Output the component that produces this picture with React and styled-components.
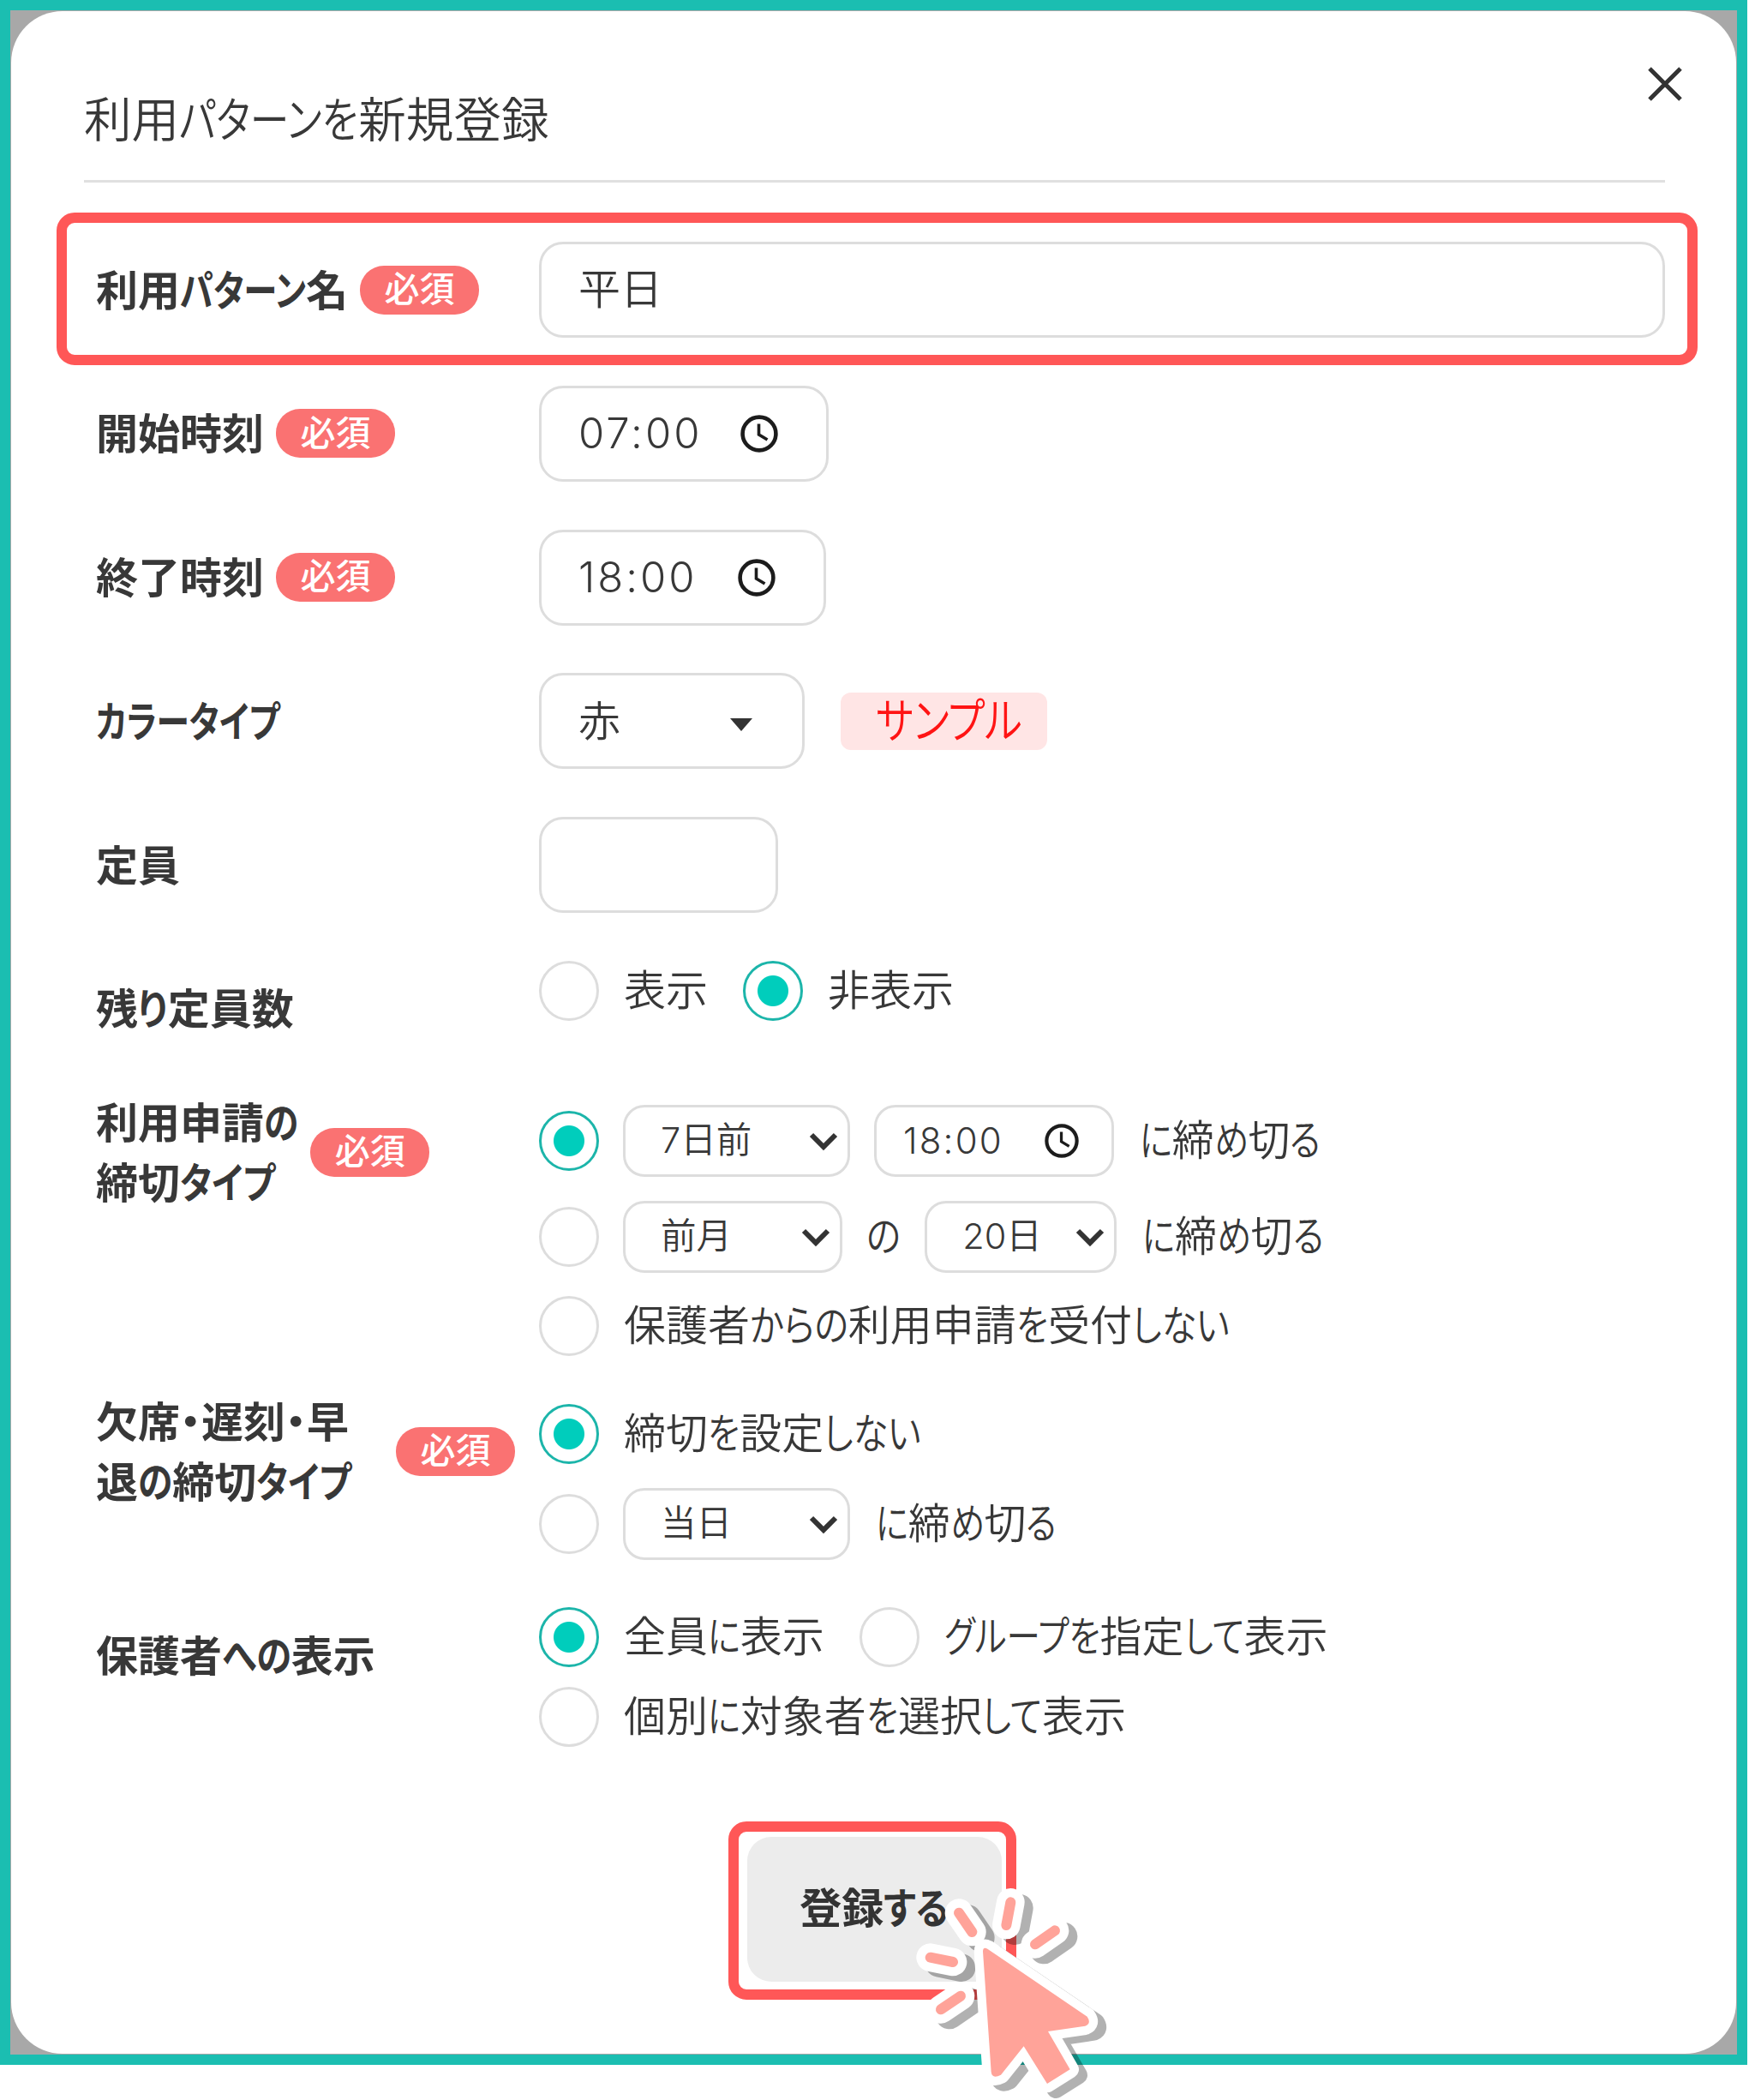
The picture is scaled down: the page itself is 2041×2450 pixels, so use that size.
import React, { useLayoutEffect, useRef, useState } from 'react';
import styled, { createGlobalStyle, css } from 'styled-components';

// advance widths of the narrow UI kana, in em
const KANA_WIDTH = {
    'パ': 0.86, 'タ': 0.74, 'ー': 0.67, 'ン': 0.73, 'を': 0.76, 'カ': 0.76,
    'ラ': 0.68, 'イ': 0.73, 'プ': 0.79, 'の': 0.82, 'り': 0.71, 'へ': 0.83,
    '・': 0.51, 'サ': 0.8, 'ル': 0.74, 'グ': 0.75, 'か': 0.82, 'ら': 0.7,
    'し': 0.7, 'な': 0.83, 'い': 0.79, 'に': 0.77, 'め': 0.81, 'る': 0.74,
    'て': 0.73, 'す': 0.82,
};

const KanaRun = ({ children }) => {
    const ref = useRef(null);
    const [scale, setScale] = useState(1);
    const width = [...children].reduce((sum, c) => sum + (KANA_WIDTH[c] || 0.78), 0);

    useLayoutEffect(() => {
        const inner = ref.current;
        setScale(inner.parentNode.offsetWidth / inner.offsetWidth);
    }, [children]);

    return (
        <KanaBox style={{ width: `${width}em` }}>
            <KanaInner ref={ref} style={{ transform: `scaleX(${scale})` }}>{children}</KanaInner>
        </KanaBox>
    );
};

const Jp = ({ children, ...rest }) => (
    <Text {...rest}>
        {children.split(/([\u3040-\u30ff]+)/).filter(Boolean).map((part, i) => (
            /[\u3040-\u30ff]/.test(part) ? <KanaRun key={i}>{part}</KanaRun> : part
        ))}
    </Text>
);

const Clock = ({ size }) => (
    <svg width={size} height={size} viewBox="0 0 44 44" fill="none" stroke="#1c1c1c">
        <circle cx="22" cy="22" r="19.4" strokeWidth="4.6" />
        <path d="M21.5 10.5V23l10 6" strokeWidth="3.6" />
    </svg>
);

const Chevron = () => (
    <svg width="34" height="24" viewBox="0 0 34 24" fill="none" stroke="#333" strokeWidth="6">
        <path d="M3 5l14 14L31 5" />
    </svg>
);

const Radio = ({ on, children }) => (
    <RadioLabel>
        <RadioMark $on={on} />
        {children && <Jp>{children}</Jp>}
    </RadioLabel>
);

const Time = ({ small, width, children }) => (
    <Control $small={small} $width={width}>
        <Digits $small={small}>{children}</Digits>
        <Clock size={small ? 40 : 44} />
    </Control>
);

const SmallSelect = ({ width, children }) => (
    <Control $small $select $width={width}>
        <Jp $size={41.5}>{children}</Jp>
        <Chevron />
    </Control>
);

const Field = ({ label, required, height, labelTop, highlight, children }) => (
    <Row $height={height} $highlight={highlight}>
        <LabelCell $top={labelTop}>
            <LabelLines>
                {label.map((line) => <Jp key={line} $bold>{line}</Jp>)}
            </LabelLines>
            {required && <Badge $end={required === 'end'}><Jp $size={41} $medium>必須</Jp></Badge>}
        </LabelCell>
        {children}
    </Row>
);

const DASHES = [
    'M796 551L875 567',
    'M896 395L942 462',
    'M1077 358L1062 438',
    'M1232 457L1163 505',
    'M902 686L833 733',
];
const ARROW = 'M980 530Q980 513 996 521L1345 758Q1361 782 1338 791L1208 810L1285 943L1205 993L1123 862L1043 962Q1012 978 1009 952Z';

const ClickCursor = () => (
    <CursorSvg viewBox="740 300 690 750" strokeLinecap="round" strokeLinejoin="round">
        <g opacity="0.3" transform="translate(30 20)" stroke="#000">
            {DASHES.map((d) => <path key={d} d={d} strokeWidth="98" />)}
            <path d={ARROW} strokeWidth="62" />
        </g>
        <g stroke="#fff" fill="#fff">
            {DASHES.map((d) => <path key={d} d={d} strokeWidth="98" />)}
            <path d={ARROW} strokeWidth="62" />
        </g>
        {DASHES.map((d) => <path key={d} d={d} stroke="#ffa399" strokeWidth="36" />)}
        <path d={ARROW} fill="#ffa399" />
    </CursorSvg>
);

const App = () => {
    return (
        <Page>
            <GlobalStyle />
            <Frame>
                <Modal>
                    <Header>
                        <Jp $size={55.6}>利用パターンを新規登録</Jp>
                        <CloseButton aria-label="close">
                            <svg width="40" height="40" viewBox="0 0 40 40" stroke="#333" strokeWidth="5">
                                <path d="M2 2L38 38M38 2L2 38" />
                            </svg>
                        </CloseButton>
                    </Header>
                    <Form>
                        <Field label={['利用パターン名']} required highlight>
                            <Control $width={1314}><Jp>平日</Jp></Control>
                        </Field>
                        <Field label={['開始時刻']} required>
                            <Time width={338}>07:00</Time>
                        </Field>
                        <Field label={['終了時刻']} required>
                            <Time width={335}>18:00</Time>
                        </Field>
                        <Field label={['カラータイプ']}>
                            <Line $gap={42}>
                                <Control $width={310}>
                                    <Jp>赤</Jp>
                                    <Triangle />
                                </Control>
                                <Sample><Jp $size={56}>サンプル</Jp></Sample>
                            </Line>
                        </Field>
                        <Field label={['定員']}>
                            <Control $width={279} />
                        </Field>
                        <Field label={['残り定員数']} height={152}>
                            <Line $gap={41}>
                                <Radio>表示</Radio>
                                <Radio on>非表示</Radio>
                            </Line>
                        </Field>
                        <Field label={['利用申請の', '締切タイプ']} required height={349}>
                            <Options $top={16}>
                                <Line $gap={28}>
                                    <Radio on />
                                    <SmallSelect width={265}>7日前</SmallSelect>
                                    <Time small width={280}>18:00</Time>
                                    <Jp $indent>に締め切る</Jp>
                                </Line>
                                <Line $gap={28} $top={28}>
                                    <Radio />
                                    <SmallSelect width={256}>前月</SmallSelect>
                                    <Jp>の</Jp>
                                    <SmallSelect width={224}>20日</SmallSelect>
                                    <Jp $indent>に締め切る</Jp>
                                </Line>
                                <Line $top={27}>
                                    <Radio>保護者からの利用申請を受付しない</Radio>
                                </Line>
                            </Options>
                        </Field>
                        <Field label={['欠席・遅刻・早', '退の締切タイプ']} required="end" height={253}>
                            <Options $top={16}>
                                <Line>
                                    <Radio on>締切を設定しない</Radio>
                                </Line>
                                <Line $gap={28} $top={28}>
                                    <Radio />
                                    <SmallSelect width={265}>当日</SmallSelect>
                                    <Jp $indent>に締め切る</Jp>
                                </Line>
                            </Options>
                        </Field>
                        <Field label={['保護者への表示']} height={268} labelTop={20}>
                            <Options>
                                <Line $gap={41}>
                                    <Radio on>全員に表示</Radio>
                                    <Radio>グループを指定して表示</Radio>
                                </Line>
                                <Line $top={23}>
                                    <Radio>個別に対象者を選択して表示</Radio>
                                </Line>
                            </Options>
                        </Field>
                        <SubmitWrap>
                            <SubmitButton><Jp $bold>登録する</Jp></SubmitButton>
                            <ClickCursor />
                        </SubmitWrap>
                    </Form>
                </Modal>
            </Frame>
        </Page>
    );
};

export default App;

const GlobalStyle = createGlobalStyle`
    *, *::after { box-sizing: border-box; }
    body {
        margin: 0;
        background: #fff;
        color: #383838;
        font-family: Inter, 'Noto Sans CJK JP', sans-serif;
    }
`

const Page = styled.div`
    min-height: 2450px;
`

const Frame = styled.div`
    width: 2039px;
    height: 2409px;
    border: 12px solid #1bbeb1;
    background: #a8a8a8;
    padding: 1px;
`

const Modal = styled.div`
    height: 100%;
    border-radius: 60px;
    background: #fff;
    padding: 0 83px 0 85px;
`

const Header = styled.header`
    height: 200px;
    border-bottom: 3px solid #e0e0e0;
    display: flex;
    justify-content: space-between;
    align-items: flex-start;
    > span { margin-top: 91px; }
`

const CloseButton = styled.button`
    border: 0;
    background: none;
    padding: 0;
    margin: 65px -20px 0 0;
    line-height: 0;
`

const Form = styled.div`
    padding: 69px 0 0 14px;
`

const Text = styled.span`
    display: inline-block;
    white-space: nowrap;
    font-size: ${({ $size }) => $size || 49}px;
    font-weight: ${({ $bold, $medium }) => ($bold ? 700 : $medium ? 500 : 350)};
    line-height: 1.3;
    margin-left: ${({ $indent }) => ($indent ? 2 : 0)}px;
`

const KanaBox = styled.span`
    display: inline-block;
`

const KanaInner = styled.span`
    display: inline-block;
    font-feature-settings: 'palt';
    transform-origin: 0 50%;
`

const highlightBox = css`
    position: relative;
    &::after {
        content: '';
        position: absolute;
        top: -34px;
        left: -46px;
        width: 1915px;
        height: 178px;
        border: 12px solid #ff5757;
        border-radius: 21px;
    }
`

const Row = styled.div`
    display: grid;
    grid-template-columns: 517px 1fr;
    align-items: start;
    height: ${({ $height }) => $height || 167.8}px;
    ${({ $highlight }) => $highlight && highlightBox}
`

const LabelCell = styled.div`
    display: flex;
    align-items: center;
    gap: 14px;
    width: 489px;
    min-height: ${({ $top }) => ($top === undefined ? 112 : 70)}px;
    margin-top: ${({ $top }) => $top || 0}px;
`

const LabelLines = styled.div`
    display: flex;
    flex-direction: column;
    margin-top: 3px;
    > span { line-height: 70px; }
`

const Badge = styled.span`
    display: flex;
    align-items: center;
    justify-content: center;
    width: 139px;
    height: 57px;
    border-radius: 28px;
    background: #fa7272;
    color: #fff;
    margin-left: ${({ $end }) => ($end ? 'auto' : 0)};
    padding-bottom: 1px;
`

const Control = styled.div`
    display: flex;
    align-items: center;
    justify-content: space-between;
    width: ${({ $width }) => $width}px;
    height: ${({ $small }) => ($small ? 84 : 112)}px;
    border: 3px solid #ddd;
    border-radius: ${({ $small }) => ($small ? 25 : 28)}px;
    background: #fff;
    padding: ${({ $small, $select }) => ($select ? '0 11px 0 41px' : $small ? '0 38px 0 31px' : '0 56px 0 43px')};
`

const Digits = styled.span`
    font-family: Inter, sans-serif;
    font-size: ${({ $small }) => ($small ? 42 : 49)}px;
    letter-spacing: ${({ $small }) => ($small ? 2.2 : 3)}px;
    font-weight: 350;
`

const Triangle = styled.span`
    border: 13px solid transparent;
    border-top: 15px solid #333;
    border-bottom: 0;
    margin: 8px 2px 0 0;
`

const Sample = styled.div`
    display: flex;
    align-items: center;
    justify-content: center;
    width: 241px;
    height: 67px;
    border-radius: 12px;
    background: #ffe5e5;
    color: #ff1414;
    padding: 0 0 1px 12px;
`

const Options = styled.div`
    padding-top: ${({ $top }) => $top || 0}px;
`

const Line = styled.div`
    display: flex;
    align-items: center;
    gap: ${({ $gap }) => $gap || 0}px;
    margin-top: ${({ $top }) => $top || 0}px;
`

const RadioLabel = styled.label`
    display: flex;
    align-items: center;
    gap: 29px;
    height: 70px;
`

const RadioMark = styled.span`
    width: 70px;
    height: 70px;
    border-radius: 50%;
    border: 3px solid ${({ $on }) => ($on ? '#1cb5aa' : '#ddd')};
    background: ${({ $on }) => ($on ? 'radial-gradient(circle, #00cdbc 17.5px, #fff 18.5px)' : '#fff')};
`

const SubmitWrap = styled.div`
    position: relative;
    width: 336px;
    height: 208px;
    margin: -18px 0 0 738px;
    border: 12px solid #ff5757;
    border-radius: 21px;
    padding: 6px 5px 0 10px;
`

const SubmitButton = styled.button`
    width: 297px;
    height: 169px;
    border: 0;
    border-radius: 28px;
    background: #ececec;
    color: #333;
    font-family: inherit;
    padding: 0 0 2px;
`

const CursorSvg = styled.svg`
    position: absolute;
    left: 205px;
    top: 63px;
    width: 230px;
    height: 250px;
`
